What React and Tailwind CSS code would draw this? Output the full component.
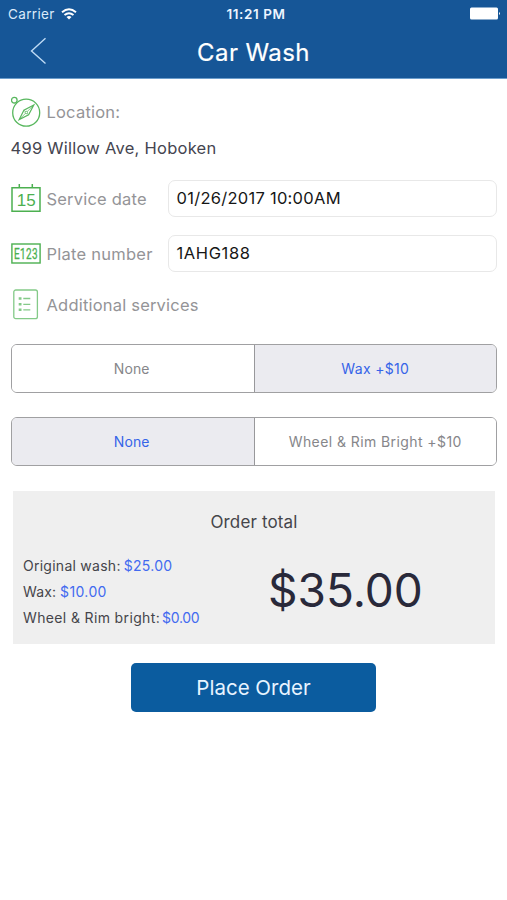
import React from "react";

function CompassIcon() {
  return (
    <svg className="h-[32px] w-[30px] shrink-0" viewBox="0 0 30 32" fill="none" stroke="#58b75e" strokeWidth="1.3">
      <circle cx="15.2" cy="16.7" r="13.5" />
      <circle cx="3.3" cy="4.2" r="2.8" fill="#fff" />
      <path d="M22.8 9 12.9 14.3 8.2 23.6 17.6 18.7Z" strokeWidth="1.2" />
      <path d="M12.9 14.3 17.6 18.7M22.8 9 8.2 23.6" strokeWidth="0.7" />
      <circle cx="15.3" cy="16.5" r="1.2" fill="#fff" strokeWidth="0.8" />
    </svg>
  );
}

function CalendarIcon() {
  return (
    <svg className="h-[30px] w-[30px] shrink-0" viewBox="0 0 30 30" fill="none" stroke="#4cb050" strokeWidth="1.5">
      <path d="M1 4.7H29V28.2H1ZM8.3 1V4.7M21.3 1V4.7" />
      <text x="15.3" y="23" textAnchor="middle" fontSize="17" fontFamily="'Liberation Sans', sans-serif" fill="#4cb050" stroke="none">15</text>
    </svg>
  );
}

function PlateIcon() {
  return (
    <svg className="h-[21px] w-[30px] shrink-0 overflow-visible" viewBox="0 0 30 21" fill="none" stroke="#4cb050" strokeWidth="1.4">
      <rect x="0.9" y="1" width="28.2" height="19" />
      <g transform="translate(3 15.6) scale(0.69 1)">
        <text fontSize="14.5" letterSpacing="0.5" fontFamily="Roboto, sans-serif" fill="#4cb050" stroke="#4cb050" strokeWidth="0.3">E123</text>
      </g>
    </svg>
  );
}

function ListIcon() {
  return (
    <svg className="mx-[2px] h-[31px] w-[26px] shrink-0" viewBox="0 0 26 31" fill="none" stroke="#84ca88" strokeWidth="1.3">
      <rect x="0.8" y="1" width="23.6" height="28.7" rx="2" />
      <path d="M10.3 9.5H17.3M10.3 15.3H17.3M10.3 20.8H17.3" />
      <path d="M5.7 9.5H8.5M5.7 15.3H8.5M5.7 20.8H8.5" strokeWidth="2.6" />
    </svg>
  );
}

function Segments({ items, selected }) {
  return (
    <div className="grid h-[49px] grid-cols-[243.5px_1fr] overflow-hidden rounded-[6px] border-[1.5px] border-[#a0a0a2] text-[14px]">
      {items.map((item, i) => (
        <button
          key={item.label}
          className={
            (i === 0 ? "border-r border-[#98989b] pr-[2px] " : "") +
            (i === selected ? "bg-[#ebebf0] text-[#3564e8]" : "bg-white text-[#86868a]")
          }
        >
          <span className={item.tracking}>{item.label}</span>
        </button>
      ))}
    </div>
  );
}

function PriceRow({ label, price, gap, tracking, priceTracking }) {
  return (
    <div className={"flex h-[25.7px] items-center " + gap}>
      <span className={"text-[#45454a] " + tracking}>{label}</span>
      <span className={"text-[#426af0] " + priceTracking}>{price}</span>
    </div>
  );
}

export default function App() {
  return (
    <main className="h-[900px] w-[507px] overflow-hidden bg-white font-['Inter',sans-serif] text-[16.5px]">
      <header className="h-[79px] border-b border-[#6c9dcc] bg-[#165697] text-white">
        <div className="grid h-[27px] grid-cols-3 items-center px-2 text-[13px]">
          <div className="flex items-center gap-[6px] pt-px text-[#dbeafa]">
            <span className="text-[13.5px] tracking-[0.35px]">Carrier</span>
            <svg className="h-[12px] w-[16px]" viewBox="0 0 16 12" fill="none" stroke="#fff" strokeWidth="2">
              <path d="M1 4.2Q8-1.6 15 4.2M3.5 7Q8 3.5 12.5 7" />
              <path d="M5.5 9Q8 7.2 10.5 9L8 11.6Z" fill="#fff" stroke="none" />
            </svg>
          </div>
          <span className="whitespace-nowrap pl-[5px] pt-[2px] text-center text-[13.5px] font-semibold tracking-[0.6px] text-[#edf5ff]">11:21 PM</span>
          <svg className="-mr-[2px] h-[13px] w-[31px] justify-self-end" viewBox="0 0 31 13" fill="#fff">
            <rect x="0" y="0.5" width="28" height="12" rx="1.5" />
            <path d="M29 5Q31 6.5 29 8Z" />
          </svg>
        </div>
        <div className="grid h-[51px] grid-cols-[110px_1fr_110px] items-center">
          <svg className="-mt-[3px] ml-[30px] h-[28px] w-[17px]" viewBox="0 0 17 28" fill="none" stroke="#bfdbf5" strokeWidth="1.4">
            <path d="M15.5 1.3 1.5 14 15.5 26.5" />
          </svg>
          <h1 className="text-center text-[24px] tracking-[0.4px] [-webkit-text-stroke:0.2px_white]">Car Wash</h1>
        </div>
      </header>

      <section className="px-[10.5px] pt-[17px] text-[#949497]">
        <div className="flex h-[32px] items-center gap-[6px]">
          <CompassIcon />
          <span className="tracking-[0.2px]">Location:</span>
        </div>
        <p className="mt-[8px] leading-[24px] tracking-[0.25px] text-[#454550]">499 Willow Ave, Hoboken</p>
        <div className="mt-[19px] flex h-[38px] items-center">
          <CalendarIcon />
          <span className="ml-[6px] w-[121px] pt-[2px] tracking-[0.2px]">Service date</span>
          <div className="flex h-[37px] flex-1 items-center rounded-[7px] border border-[#e8e8e8] px-[8px] text-[#161616]">
            <span className="tracking-[0.27px]">01/26/2017 10:00AM</span>
          </div>
        </div>
        <div className="mt-[17px] flex h-[38px] items-center">
          <PlateIcon />
          <span className="ml-[6px] w-[121px] pt-[2px] tracking-[0.25px]">Plate number</span>
          <div className="flex h-[37px] flex-1 items-center rounded-[7px] border border-[#e8e8e8] px-[8px] text-[#161616]">
            <span className="tracking-[0.6px]">1AHG188</span>
          </div>
        </div>
        <div className="mt-[17px] flex h-[31px] items-center gap-[6px]">
          <ListIcon />
          <span className="pt-[2px] tracking-[0.2px]">Additional services</span>
        </div>
        <div className="mt-[24px] grid gap-[24px]">
          <Segments
            selected={1}
            items={[
              { label: "None", tracking: "tracking-[0.1px]" },
              { label: "Wax +$10", tracking: "tracking-[0.33px]" },
            ]}
          />
          <Segments
            selected={0}
            items={[
              { label: "None", tracking: "tracking-[0.1px]" },
              { label: "Wheel & Rim Bright +$10", tracking: "tracking-[0.42px]" },
            ]}
          />
        </div>
      </section>

      <section className="ml-[13px] mt-[25px] h-[153px] w-[482px] bg-[#efefef] pt-[18px]">
        <h2 className="text-center text-[17px] leading-[26px] tracking-[0.15px] text-[#45454a]">Order total</h2>
        <div className="mt-[18px] flex items-start pl-[10px]">
          <div className="w-[245px] text-[14px]">
            <PriceRow label="Original wash:" price="$25.00" gap="gap-[3px]" tracking="tracking-[0.26px]" priceTracking="tracking-[0.3px]" />
            <PriceRow label="Wax:" price="$10.00" gap="gap-[4px]" tracking="tracking-[0.1px]" priceTracking="tracking-[0.38px]" />
            <PriceRow label="Wheel & Rim bright:" price="$0.00" gap="gap-[2px]" tracking="tracking-[0.36px]" priceTracking="tracking-[-0.3px]" />
          </div>
          <strong className="mt-[12px] text-[46px] font-normal leading-[50px] text-[#29293a]">$35.00</strong>
        </div>
      </section>

      <button className="mx-auto mt-[19px] block h-[49px] w-[245px] rounded-[5px] bg-[#0b5c9f] pt-[2px] text-[20.5px] text-[#e8f4ff]">
        <span>Place Order</span>
      </button>
    </main>
  );
}
